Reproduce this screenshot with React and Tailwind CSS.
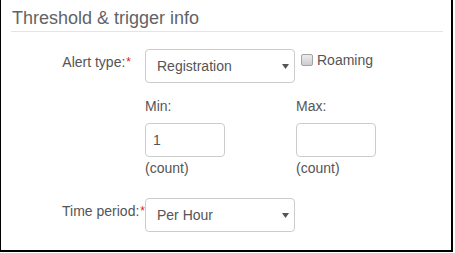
const Req = () => (
  <span className="mt-[4px] ml-px text-[12px] leading-none text-[#e02020]">*</span>
)

const FakeSelect = ({ value }) => (
  <div className="w-[150px] h-[34px] shrink-0 flex items-center justify-between pl-[11px] pr-[5px] border border-[#cccccc] rounded-[4px] bg-white text-[14px] text-[#555]">
    <span>{value}</span>
    <svg width="7" height="5" viewBox="0 0 7 5">
      <polygon points="0,0 7,0 3.5,5" fill="#555" />
    </svg>
  </div>
)

const CountInput = ({ value = "" }) => (
  <div className="w-[80px] h-[34px] flex items-center pl-[7px] border border-[#cccccc] rounded-[4px] bg-white text-[14px] text-[#555]">
    {value}
  </div>
)

export default function App() {
  return (
    <div className="w-[455px] h-[253px] bg-white">
      <div className="w-[453px] h-[252px] border-l border-r-2 border-b-2 border-black font-['Liberation_Sans',Arial,sans-serif] text-[#555]">
        {/* section header */}
        <div className="pl-[10px] pr-[8px] pt-[6px]">
          <h2 className="pl-px text-[18px] leading-[25px] text-[#5f6368] border-b border-[#e5e5e5]">
            Threshold &amp; trigger info
          </h2>
        </div>

        {/* alert type */}
        <div className="flex mt-[17px]">
          <div className="w-[144px] shrink-0 flex justify-end pr-[14px] pt-[3px] text-[14px] leading-[20px]">
            <span>Alert type:</span>
            <Req />
          </div>
          <FakeSelect value="Registration" />
          <div className="ml-[6px] mt-[5px] w-[12px] h-[12px] rounded-[2px] border border-[#a3a3a3] bg-gradient-to-b from-[#ececec] to-[#cdcdcd]" />
          <span className="ml-[4px] mt-px text-[14px] leading-[20px]">Roaming</span>
        </div>

        {/* min / max */}
        <div className="flex pl-[144px] mt-[13px] text-[14px] leading-[20px]">
          <div className="w-[151px] flex flex-col">
            <span>Min:</span>
            <div className="mt-[7px]"><CountInput value="1" /></div>
            <span className="mt-px">(count)</span>
          </div>
          <div className="flex flex-col">
            <span>Max:</span>
            <div className="mt-[7px]"><CountInput /></div>
            <span className="mt-px">(count)</span>
          </div>
        </div>

        {/* time period */}
        <div className="flex mt-[20px]">
          <div className="w-[144px] shrink-0 flex justify-end pr-0 pt-[3px] text-[14px] leading-[20px]">
            <span>Time period:</span>
            <Req />
          </div>
          <FakeSelect value="Per Hour" />
        </div>
      </div>
    </div>
  )
}
